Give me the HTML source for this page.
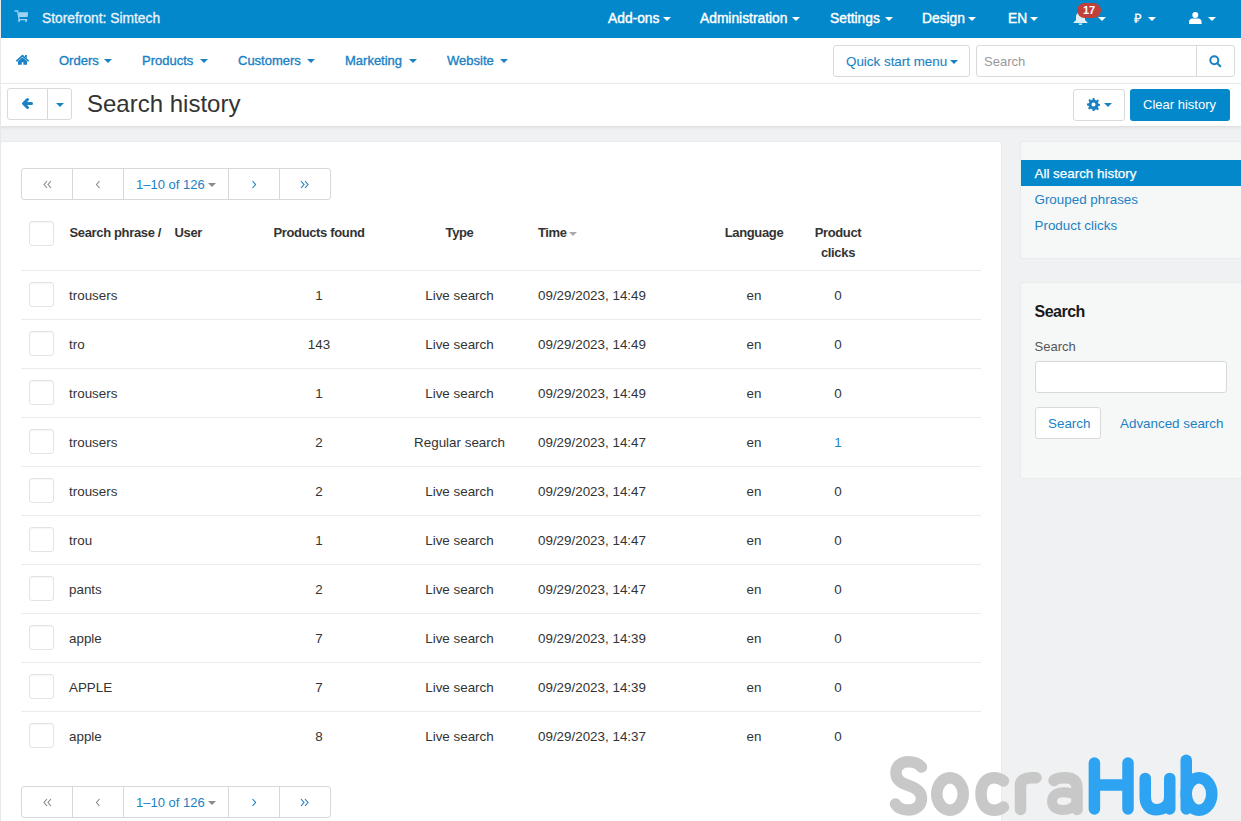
<!DOCTYPE html>
<html><head><meta charset="utf-8">
<style>
*{box-sizing:border-box;margin:0;padding:0}
html,body{width:1241px;height:821px;overflow:hidden}
body{font-family:"Liberation Sans",sans-serif;font-size:13px;color:#333;background:#eff1f2;position:relative}
.abs{position:absolute}
.caret{display:inline-block;width:0;height:0;border-left:4px solid transparent;border-right:4px solid transparent;border-top:4px solid currentColor;vertical-align:middle}
#top{left:0;top:0;width:1241px;height:37.5px;background:#0388cc;color:#fff}
#top .t{position:absolute;top:11px;line-height:15px;font-size:13.8px;-webkit-text-stroke:0.4px #fff;letter-spacing:0px;white-space:nowrap}
#top .c{position:absolute;top:17px;border-left:4px solid transparent;border-right:4px solid transparent;border-top:4px solid #fff;width:0;height:0}
#nav{left:0;top:37.5px;width:1241px;height:46.5px;background:#fff;border-bottom:1px solid #f0f0f0}
#nav .t{position:absolute;top:15px;line-height:15px;color:#1a81c4;-webkit-text-stroke:0.35px #1a81c4;white-space:nowrap}
#nav .c{position:absolute;top:21px;border-left:4px solid transparent;border-right:4px solid transparent;border-top:4px solid #1a81c4;width:0;height:0}
#title{left:0;top:84px;width:1241px;height:42px;background:#fff;box-shadow:0 1px 4px rgba(0,0,0,0.10)}
.btn{position:absolute;border:1px solid #d9dadb;border-radius:3px;background:#fff}
.panel{position:absolute;background:#fff;border-radius:2px;box-shadow:0 0 2px rgba(0,0,0,0.10)}
.th{position:absolute;font-weight:bold;color:#333;letter-spacing:-0.35px;line-height:20px;white-space:nowrap}
.td{position:absolute;line-height:15px;font-size:13.4px;white-space:nowrap;color:#333}
.cb{position:absolute;left:29px;width:25px;height:25px;border:1px solid #e4e4e4;border-radius:3px;background:#fff;box-shadow:inset 0 1px 1px rgba(0,0,0,0.04)}
.hl{position:absolute;left:21px;width:960px;height:1px;background:#e9ebed}
.pg{position:absolute;left:21px;width:310px;height:32px;border:1px solid #d6d9dc;border-radius:3px;background:#fff}
.pg .s{position:absolute;top:0;bottom:0;border-left:1px solid #d6d9dc}
.c{width:200px;text-align:center}
.lk{color:#1a81c4}
.side{background:#f6f7f7}
.sl{line-height:15px;color:#1a81c4;white-space:nowrap;font-size:13.4px}
.pg .t{position:absolute;top:8px;line-height:15px;color:#1a81c4;white-space:nowrap}
</style></head><body>

<!-- TOP BAR -->
<div id="top" class="abs">
  <svg class="abs" style="left:10px;top:5px" width="25" height="25" viewBox="10 5 25 25"><path d="M14.6 11H17.6L19.2 19.6H27.2" fill="none" stroke="#9fd3f2" stroke-width="1.3"/><path d="M18.3 12.2H28.1L27.6 17.1H19.1z" fill="#9fd3f2"/><rect x="18.2" y="19.4" width="1.8" height="2.4" fill="#9fd3f2"/><rect x="25.2" y="19.4" width="1.8" height="2.4" fill="#9fd3f2"/></svg>
  <div class="t" style="left:42px;-webkit-text-stroke:0.3px #eaf4fb;color:#eaf4fb">Storefront: Simtech</div>
  <div class="t" style="left:608px">Add-ons</div><div class="c" style="left:663px"></div>
  <div class="t" style="left:700px">Administration</div><div class="c" style="left:792px"></div>
  <div class="t" style="left:830px">Settings</div><div class="c" style="left:885px"></div>
  <div class="t" style="left:922px">Design</div><div class="c" style="left:968px"></div>
  <div class="t" style="left:1008px">EN</div><div class="c" style="left:1030px"></div>
  <svg class="abs" style="left:1073px;top:12px" width="15" height="13" viewBox="0 0 15 13"><path d="M7.5 0C4.5 0 3 2.5 3 5v3L0.5 10.5V11h14v-.5L12 8V5c0-2.5-1.5-5-4.5-5z M5.8 11.5a1.7 1.7 0 0 0 3.4 0z" fill="#dbeefa"/></svg>
  <div class="abs" style="left:1077px;top:3px;width:24px;height:15px;border-radius:8px;background:#c0413c;color:#fff;font-size:11px;font-weight:bold;line-height:15px;text-align:center">17</div>
  <div class="c" style="left:1098px"></div>
  <div class="t" style="left:1134px;-webkit-text-stroke:0.2px #fff;font-size:13px">₽</div><div class="c" style="left:1148px"></div>
  <svg class="abs" style="left:1189px;top:12px" width="13" height="13" viewBox="0 0 13 13"><circle cx="6.3" cy="3" r="3" fill="#fff"/><path d="M0 12v-2C0 8 1.6 6.6 3.3 6.6h6C11 6.6 12.6 8 12.6 10V12z" fill="#fff"/></svg>
  <div class="c" style="left:1208px"></div>
</div>

<!-- NAV -->
<div id="nav" class="abs">
  <svg class="abs" style="left:10px;top:12.5px" width="30" height="22" viewBox="10 50 30 22"><path d="M16.8 60.8L22.5 55.6 28.2 60.8" fill="none" stroke="#1a81c4" stroke-width="1.6" stroke-linecap="round"/><path d="M25 55h1.8v3.3L25 56.8z" fill="#1a81c4"/><path d="M18 61.2L22.5 57.2 27 61.2V64.8H23.4V62.2H21.8V64.8H18z" fill="#1a81c4"/></svg>
  <div class="t" style="left:59px">Orders</div><div class="c" style="left:104px"></div>
  <div class="t" style="left:142px">Products</div><div class="c" style="left:200px"></div>
  <div class="t" style="left:238px">Customers</div><div class="c" style="left:307px"></div>
  <div class="t" style="left:345px">Marketing</div><div class="c" style="left:409px"></div>
  <div class="t" style="left:447px">Website</div><div class="c" style="left:500px"></div>
  <div class="btn" style="left:833px;top:7.5px;width:137px;height:32px"></div>
  <div class="t" style="left:846px;top:16px;font-size:13.4px;-webkit-text-stroke:0.1px #1a81c4">Quick start menu</div>
  <div class="c" style="left:950px;top:22px"></div>
  <div class="btn" style="left:976px;top:7.5px;width:259px;height:32px"></div>
  <div class="abs" style="left:1196px;top:8px;width:1px;height:31px;background:#d9dadb"></div>
  <div class="abs" style="left:984px;top:16px;line-height:15px;color:#999">Search</div>
  <svg class="abs" style="left:1209px;top:17px" width="13" height="13" viewBox="0 0 13 13"><circle cx="5.3" cy="5.3" r="4" fill="none" stroke="#1a81c4" stroke-width="2"/><path d="M8.3 8.3l3 3" stroke="#1a81c4" stroke-width="2" stroke-linecap="round"/></svg>
</div>

<!-- TITLE -->
<div id="title" class="abs">
  <div class="btn" style="left:7px;top:4px;width:65px;height:32px"></div>
  <div class="abs" style="left:47px;top:5px;width:1px;height:30px;background:#d6d9dc"></div>
  <svg class="abs" style="left:21px;top:13px" width="13" height="13" viewBox="0 0 13 13"><path d="M6.5 2.5L2.5 6.5 6.5 10.5M3 6.5H10.5" fill="none" stroke="#1a81c4" stroke-width="3" stroke-linecap="round" stroke-linejoin="round"/></svg>
  <div class="abs" style="left:56px;top:19px;border-left:4px solid transparent;border-right:4px solid transparent;border-top:4px solid #1a81c4"></div>
  <div class="abs" style="left:87px;top:6px;font-size:24px;line-height:28px;color:#333">Search history</div>
  <div class="btn" style="left:1073px;top:5px;width:52px;height:31.5px"></div>
  <svg class="abs" style="left:1087px;top:14px" width="13" height="13" viewBox="0 0 14 14"><path d="M6 0h2l.3 2a5 5 0 0 1 1.5.7l1.7-1.2 1.4 1.4-1.2 1.7a5 5 0 0 1 .7 1.5l2 .3v2l-2 .3a5 5 0 0 1-.7 1.5l1.2 1.7-1.4 1.4-1.7-1.2a5 5 0 0 1-1.5.7L8 14H6l-.3-2a5 5 0 0 1-1.5-.7l-1.7 1.2-1.4-1.4 1.2-1.7A5 5 0 0 1 1.6 8.3L0 8V6l2-.3a5 5 0 0 1 .7-1.5L1.5 2.5 2.9 1.1l1.7 1.2A5 5 0 0 1 6.1 1.6zM7 4.8A2.2 2.2 0 1 0 7 9.2 2.2 2.2 0 1 0 7 4.8z" fill="#1a81c4"/></svg>
  <div class="abs" style="left:1104px;top:19px;border-left:4px solid transparent;border-right:4px solid transparent;border-top:4px solid #1a81c4"></div>
  <div class="abs" style="left:1130px;top:5px;width:100px;height:31.5px;background:#0388cc;border-radius:3px"></div>
  <div class="abs" style="left:1143px;top:13px;line-height:15px;color:#fff">Clear history</div>
</div>

<!-- MAIN PANEL -->
<div class="panel" style="left:1px;top:142px;width:1000px;height:700px"></div>
<!-- pagination top -->
<div class="pg" style="top:168px">
  <div class="s" style="left:50px"></div><div class="s" style="left:101px"></div><div class="s" style="left:206px"></div><div class="s" style="left:257px"></div>
  <svg class="abs" style="left:21px;top:11px" width="9" height="9" viewBox="0 0 9 9"><path d="M4 1L1 4.5 4 8M8 1L5 4.5 8 8" fill="none" stroke="#8a8a8a" stroke-width="1.15"/></svg>
  <svg class="abs" style="left:73px;top:11px" width="6" height="9" viewBox="0 0 6 9"><path d="M4.5 1L1.5 4.5 4.5 8" fill="none" stroke="#8a8a8a" stroke-width="1.15"/></svg>
  <div class="t" style="left:114px">1–10 of 126</div>
  <div class="abs" style="left:186px;top:14px;border-left:4px solid transparent;border-right:4px solid transparent;border-top:4px solid #8a8a8a"></div>
  <svg class="abs" style="left:229px;top:11px" width="6" height="9" viewBox="0 0 6 9"><path d="M1.5 1L4.5 4.5 1.5 8" fill="none" stroke="#1a81c4" stroke-width="1.15"/></svg>
  <svg class="abs" style="left:278px;top:11px" width="9" height="9" viewBox="0 0 9 9"><path d="M1 1L4 4.5 1 8M5 1L8 4.5 5 8" fill="none" stroke="#1a81c4" stroke-width="1.15"/></svg>
</div>
<!-- table header -->
<div class="cb" style="top:221px"></div>
<div class="th" style="left:69.5px;top:223px">Search phrase /</div>
<div class="th" style="left:174.5px;top:223px">User</div>
<div class="th c" style="left:219px;top:223px">Products found</div>
<div class="th c" style="left:359.5px;top:223px">Type</div>
<div class="th" style="left:538px;top:223px">Time</div>
<div class="abs" style="left:569px;top:232px;border-left:4px solid transparent;border-right:4px solid transparent;border-top:4px solid #aaa"></div>
<div class="th c" style="left:654px;top:223px">Language</div>
<div class="th c" style="left:738px;top:223px">Product<br>clicks</div>
<div class="hl" style="top:270px"></div>
<div class="cb" style="top:282px"></div>
<div class="td" style="left:69px;top:288px">trousers</div>
<div class="td c" style="left:219px;top:288px">1</div>
<div class="td c" style="left:359.5px;top:288px">Live search</div>
<div class="td" style="left:538px;top:288px">09/29/2023, 14:49</div>
<div class="td c" style="left:654px;top:288px">en</div>
<div class="td c" style="left:738px;top:288px">0</div>
<div class="hl" style="top:319px"></div>
<div class="cb" style="top:331px"></div>
<div class="td" style="left:69px;top:337px">tro</div>
<div class="td c" style="left:219px;top:337px">143</div>
<div class="td c" style="left:359.5px;top:337px">Live search</div>
<div class="td" style="left:538px;top:337px">09/29/2023, 14:49</div>
<div class="td c" style="left:654px;top:337px">en</div>
<div class="td c" style="left:738px;top:337px">0</div>
<div class="hl" style="top:368px"></div>
<div class="cb" style="top:380px"></div>
<div class="td" style="left:69px;top:386px">trousers</div>
<div class="td c" style="left:219px;top:386px">1</div>
<div class="td c" style="left:359.5px;top:386px">Live search</div>
<div class="td" style="left:538px;top:386px">09/29/2023, 14:49</div>
<div class="td c" style="left:654px;top:386px">en</div>
<div class="td c" style="left:738px;top:386px">0</div>
<div class="hl" style="top:417px"></div>
<div class="cb" style="top:429px"></div>
<div class="td" style="left:69px;top:435px">trousers</div>
<div class="td c" style="left:219px;top:435px">2</div>
<div class="td c" style="left:359.5px;top:435px">Regular search</div>
<div class="td" style="left:538px;top:435px">09/29/2023, 14:47</div>
<div class="td c" style="left:654px;top:435px">en</div>
<div class="td c lk" style="left:738px;top:435px">1</div>
<div class="hl" style="top:466px"></div>
<div class="cb" style="top:478px"></div>
<div class="td" style="left:69px;top:484px">trousers</div>
<div class="td c" style="left:219px;top:484px">2</div>
<div class="td c" style="left:359.5px;top:484px">Live search</div>
<div class="td" style="left:538px;top:484px">09/29/2023, 14:47</div>
<div class="td c" style="left:654px;top:484px">en</div>
<div class="td c" style="left:738px;top:484px">0</div>
<div class="hl" style="top:515px"></div>
<div class="cb" style="top:527px"></div>
<div class="td" style="left:69px;top:533px">trou</div>
<div class="td c" style="left:219px;top:533px">1</div>
<div class="td c" style="left:359.5px;top:533px">Live search</div>
<div class="td" style="left:538px;top:533px">09/29/2023, 14:47</div>
<div class="td c" style="left:654px;top:533px">en</div>
<div class="td c" style="left:738px;top:533px">0</div>
<div class="hl" style="top:564px"></div>
<div class="cb" style="top:576px"></div>
<div class="td" style="left:69px;top:582px">pants</div>
<div class="td c" style="left:219px;top:582px">2</div>
<div class="td c" style="left:359.5px;top:582px">Live search</div>
<div class="td" style="left:538px;top:582px">09/29/2023, 14:47</div>
<div class="td c" style="left:654px;top:582px">en</div>
<div class="td c" style="left:738px;top:582px">0</div>
<div class="hl" style="top:613px"></div>
<div class="cb" style="top:625px"></div>
<div class="td" style="left:69px;top:631px">apple</div>
<div class="td c" style="left:219px;top:631px">7</div>
<div class="td c" style="left:359.5px;top:631px">Live search</div>
<div class="td" style="left:538px;top:631px">09/29/2023, 14:39</div>
<div class="td c" style="left:654px;top:631px">en</div>
<div class="td c" style="left:738px;top:631px">0</div>
<div class="hl" style="top:662px"></div>
<div class="cb" style="top:674px"></div>
<div class="td" style="left:69px;top:680px">APPLE</div>
<div class="td c" style="left:219px;top:680px">7</div>
<div class="td c" style="left:359.5px;top:680px">Live search</div>
<div class="td" style="left:538px;top:680px">09/29/2023, 14:39</div>
<div class="td c" style="left:654px;top:680px">en</div>
<div class="td c" style="left:738px;top:680px">0</div>
<div class="hl" style="top:711px"></div>
<div class="cb" style="top:723px"></div>
<div class="td" style="left:69px;top:729px">apple</div>
<div class="td c" style="left:219px;top:729px">8</div>
<div class="td c" style="left:359.5px;top:729px">Live search</div>
<div class="td" style="left:538px;top:729px">09/29/2023, 14:37</div>
<div class="td c" style="left:654px;top:729px">en</div>
<div class="td c" style="left:738px;top:729px">0</div>
<!-- pagination bottom -->
<div class="pg" style="top:786px">
  <div class="s" style="left:50px"></div><div class="s" style="left:101px"></div><div class="s" style="left:206px"></div><div class="s" style="left:257px"></div>
  <svg class="abs" style="left:21px;top:11px" width="9" height="9" viewBox="0 0 9 9"><path d="M4 1L1 4.5 4 8M8 1L5 4.5 8 8" fill="none" stroke="#8a8a8a" stroke-width="1.15"/></svg>
  <svg class="abs" style="left:73px;top:11px" width="6" height="9" viewBox="0 0 6 9"><path d="M4.5 1L1.5 4.5 4.5 8" fill="none" stroke="#8a8a8a" stroke-width="1.15"/></svg>
  <div class="t" style="left:114px">1–10 of 126</div>
  <div class="abs" style="left:186px;top:14px;border-left:4px solid transparent;border-right:4px solid transparent;border-top:4px solid #8a8a8a"></div>
  <svg class="abs" style="left:229px;top:11px" width="6" height="9" viewBox="0 0 6 9"><path d="M1.5 1L4.5 4.5 1.5 8" fill="none" stroke="#1a81c4" stroke-width="1.15"/></svg>
  <svg class="abs" style="left:278px;top:11px" width="9" height="9" viewBox="0 0 9 9"><path d="M1 1L4 4.5 1 8M5 1L8 4.5 5 8" fill="none" stroke="#1a81c4" stroke-width="1.15"/></svg>
</div>
<!-- SIDEBAR -->
<div class="panel side" style="left:1021px;top:142px;width:230px;height:116px"></div>
<div class="abs" style="left:1021px;top:160px;width:220px;height:26px;background:#0388cc"></div>
<div class="abs sl" style="left:1034.5px;top:166px;color:#fff;-webkit-text-stroke:0.25px #fff">All search history</div>
<div class="abs sl" style="left:1034.5px;top:192px">Grouped phrases</div>
<div class="abs sl" style="left:1034.5px;top:218px">Product clicks</div>
<div class="panel side" style="left:1021px;top:283px;width:230px;height:195px"></div>
<div class="abs" style="left:1034.5px;top:303px;font-size:16px;font-weight:bold;letter-spacing:-0.5px;color:#1a1a1a;line-height:18px">Search</div>
<div class="abs" style="left:1034.5px;top:339px;color:#555;line-height:15px">Search</div>
<div class="btn" style="left:1035px;top:361px;width:192px;height:32px;border-color:#d6d9dc"></div>
<div class="btn" style="left:1035px;top:407px;width:66px;height:32px"></div>
<div class="abs sl" style="left:1048px;top:416px">Search</div>
<div class="abs sl" style="left:1120px;top:416px">Advanced search</div>
<!-- WATERMARK -->
<svg class="abs" style="left:0;top:0" width="1241" height="821" viewBox="0 0 1241 821" fill="none" stroke-width="11.5" stroke-linecap="round" stroke-linejoin="round">
<g stroke="#c8c8c8">
<path d="M921.5,767 C918.5,763.5 914,761.75 908.5,761.75 C900.5,761.75 896,766.5 896,773 C896,780.5 902,783.5 908.5,785.5 C915.5,787.8 921.5,791 921.5,798.5 C921.5,806 915.5,810 908,810 C902,810 897.5,807.5 895.5,804"/>
<ellipse cx="950" cy="794" rx="13.25" ry="16.25"/>
<path d="M1003.5,781 C1001,779 998,777.75 994,777.75 C985.5,777.75 981,785 981,794 C981,803 985.5,810.25 994,810.25 C998,810.25 1001,809 1003.5,807"/>
<path d="M1020.5,809.5 V785 C1020.5,780 1026,777.75 1031,777.75 L1036,777.75"/>
<path d="M1054,780.5 C1056.5,778.5 1060,777.75 1065,777.75 C1073,777.75 1077,781 1077,789 V809.5 "/><path stroke-width="10" d="M1077,796.5 C1073,793.5 1069,792.3 1064,792.3 C1056,792.3 1052,796 1052,801.5 C1052,806.5 1056,810 1063,810 C1070,810 1075,806.5 1077,802"/>
</g>
<g stroke="#2ea3f2">
<path d="M1094.4,763 V809 M1128,763 V809 M1094.4,785 H1128"/>
<path d="M1145.25,778.4 V797 C1145.25,805 1149.5,809.8 1156.5,809.8 C1164,809.8 1169.75,805 1169.75,797 M1169.75,778.4 V809"/>
<path d="M1186.25,760.25 V809"/>
<ellipse cx="1199" cy="794" rx="12.8" ry="16.25"/>
</g>
</svg>
<div class="abs" style="left:0;top:0;width:1px;height:821px;background:#e6e8e9"></div>
</body></html>
